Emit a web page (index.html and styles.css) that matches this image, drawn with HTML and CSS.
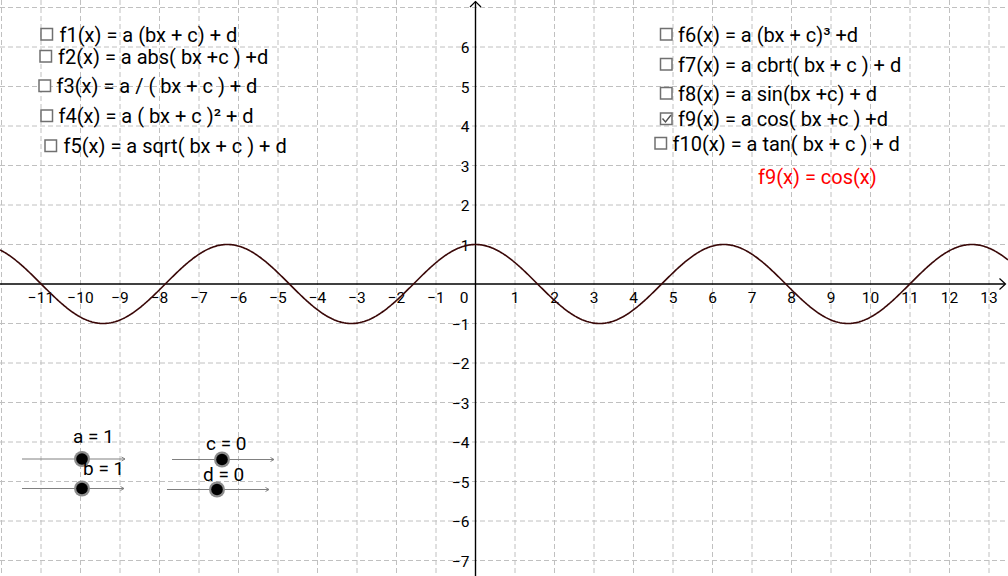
FILE: index.html
```html
<!DOCTYPE html>
<html lang="en">
<head>
<meta charset="utf-8">
<title>Function families</title>
<link rel="stylesheet" href="styles.css">
</head>
<body>
<div class="applet">
  <svg class="plot" id="plot" width="1008" height="576" viewBox="0 0 1008 576" xmlns="http://www.w3.org/2000/svg">
    <g id="grid" class="grid"></g>
    <g class="axes">
      <line class="axis" x1="0" y1="284" x2="1005" y2="284"/>
      <polyline class="axis-arrow" points="999.5,278.5 1005.5,284 999.5,289.5"/>
      <line class="axis" x1="475.5" y1="1.5" x2="475.5" y2="576"/>
      <polyline class="axis-arrow" points="470,7 475.5,1.5 481,7"/>
    </g>
    <g id="ticks" class="ticks"></g>
    <path id="curve" class="curve" d=""/>

    <g class="checks">
      <rect class="box" x="41" y="28.5" width="11.5" height="11.5"/>
      <text class="fn" x="59.5" y="41.5">f1(x) = a (bx + c) + d</text>
      <rect class="box" x="40" y="50.5" width="11.5" height="11.5"/>
      <text class="fn" x="58" y="63.5">f2(x) = a abs( bx +c ) +d</text>
      <rect class="box" x="39" y="80" width="11.5" height="11.5"/>
      <text class="fn" x="56.5" y="93">f3(x) = a / ( bx + c ) + d</text>
      <rect class="box" x="41" y="110" width="11.5" height="11.5"/>
      <text class="fn" x="58.5" y="123">f4(x) = a ( bx + c )² + d</text>
      <rect class="box" x="45" y="140" width="11.5" height="11.5"/>
      <text class="fn" x="63.5" y="153">f5(x) = a sqrt( bx + c ) + d</text>

      <rect class="box" x="660.5" y="28.5" width="11.5" height="11.5"/>
      <text class="fn" x="678" y="41.5">f6(x) = a (bx + c)³ +d</text>
      <rect class="box" x="660.5" y="58.5" width="11.5" height="11.5"/>
      <text class="fn" x="678" y="71.5">f7(x) = a cbrt( bx + c ) + d</text>
      <rect class="box" x="660.5" y="87.5" width="11.5" height="11.5"/>
      <text class="fn" x="678" y="100.5">f8(x) = a sin(bx +c) + d</text>
      <rect class="box" x="660.5" y="113" width="11.5" height="11.5"/>
      <polyline class="tickmark" points="662.5,118.5 665.5,122 671,115"/>
      <text class="fn" x="678" y="125.5">f9(x) = a cos( bx +c ) +d</text>
      <rect class="box" x="655" y="137.5" width="11.5" height="11.5"/>
      <text class="fn" x="672.5" y="150.5">f10(x) = a tan( bx + c ) + d</text>

      <text class="fn fn-red" x="758" y="184">f9(x) = cos(x)</text>
    </g>

    <g class="sliders">
      <line class="track" x1="22" y1="459" x2="125" y2="459"/>
      <polyline class="track-arrow" points="121.5,457 125,459 121.5,461"/>
      <text class="slabel" x="73" y="443">a = 1</text>
      <circle class="halo" cx="82" cy="459" r="8"/>
      <circle class="knob" cx="82" cy="459" r="5.8"/>

      <line class="track" x1="22" y1="488.5" x2="124" y2="488.5"/>
      <polyline class="track-arrow" points="120.5,486.5 124,488.5 120.5,490.5"/>
      <text class="slabel" x="83" y="474.5">b = 1</text>
      <circle class="halo" cx="82" cy="488.5" r="8"/>
      <circle class="knob" cx="82" cy="488.5" r="5.8"/>

      <line class="track" x1="172" y1="459.5" x2="274" y2="459.5"/>
      <polyline class="track-arrow" points="270.5,457.5 274,459.5 270.5,461.5"/>
      <text class="slabel" x="206" y="450">c = 0</text>
      <circle class="halo" cx="222" cy="459.5" r="8"/>
      <circle class="knob" cx="222" cy="459.5" r="5.8"/>

      <line class="track" x1="167" y1="489.5" x2="269" y2="489.5"/>
      <polyline class="track-arrow" points="265.5,487.5 269,489.5 265.5,491.5"/>
      <text class="slabel" x="203" y="481">d = 0</text>
      <circle class="halo" cx="217" cy="489.5" r="8"/>
      <circle class="knob" cx="217" cy="489.5" r="5.8"/>
    </g>
  </svg>
</div>
<script src="script.js"></script>
</body>
</html>
```

FILE: styles.css
```css
html, body {
  margin: 0;
  padding: 0;
  background: #ffffff;
}

.applet {
  width: 1008px;
  height: 576px;
  overflow: hidden;
  position: relative;
  background: #ffffff;
}

.plot {
  display: block;
}

.grid line {
  stroke: #c0c0c0;
  stroke-width: 1;
  stroke-dasharray: 5 3;
}

.axis {
  stroke: #000000;
  stroke-width: 1.4;
}

.axis-arrow {
  fill: none;
  stroke: #000000;
  stroke-width: 1.2;
}

.ticks text {
  font-family: Roboto, "Liberation Sans", sans-serif;
  font-size: 15.5px;
  fill: #000000;
}

.curve {
  fill: none;
  stroke: #3a0808;
  stroke-width: 1.6;
}

.box {
  fill: #ffffff;
  stroke: #707070;
  stroke-width: 1.5;
}

.tickmark {
  fill: none;
  stroke: #505050;
  stroke-width: 1.4;
}

.fn {
  font-family: Roboto, "Liberation Sans", sans-serif;
  font-size: 20px;
  fill: #000000;
}

.fn-red {
  fill: #ff0000;
}

.track {
  stroke: #808080;
  stroke-width: 1;
}

.track-arrow {
  fill: none;
  stroke: #808080;
  stroke-width: 1;
}

.slabel {
  font-family: Roboto, "Liberation Sans", sans-serif;
  font-size: 19px;
  fill: #000000;
}

.halo {
  fill: #8c8c8c;
}

.knob {
  fill: #000000;
}
```

FILE: script.js
```javascript
(function () {
  var NS = "http://www.w3.org/2000/svg";
  var ox = 475.5, oy = 284, u = 39.5;
  var grid = document.getElementById("grid");
  var ticks = document.getElementById("ticks");

  function el(name, attrs, parent, text) {
    var e = document.createElementNS(NS, name);
    for (var k in attrs) e.setAttribute(k, attrs[k]);
    if (text !== undefined) e.textContent = text;
    parent.appendChild(e);
    return e;
  }

  for (var i = -12; i <= 13; i++) {
    if (i === 0) continue;
    var x = ox + i * u;
    el("line", { x1: x, y1: 0, x2: x, y2: 576 }, grid);
  }
  for (var j = -7; j <= 7; j++) {
    if (j === 0) continue;
    var y = oy - j * u;
    el("line", { x1: 0, y1: y, x2: 1008, y2: y }, grid);
  }

  function num(n) {
    return n < 0 ? "\u2212" + (-n) : String(n);
  }

  for (var a = -11; a <= 13; a++) {
    if (a === 0) continue;
    el("text", { x: ox + a * u, y: oy + 19, "text-anchor": "middle" }, ticks, num(a));
  }
  el("text", { x: ox - 7, y: oy + 19, "text-anchor": "end" }, ticks, "0");
  for (var b = -7; b <= 6; b++) {
    if (b === 0) continue;
    el("text", { x: ox - 6, y: oy - b * u + 6, "text-anchor": "end" }, ticks, num(b));
  }

  var d = "";
  for (var px = 0; px <= 1008; px += 1) {
    var yy = oy - u * Math.cos((px - ox) / u);
    d += (px === 0 ? "M" : "L") + px + " " + yy.toFixed(2);
  }
  document.getElementById("curve").setAttribute("d", d);
})();
```
